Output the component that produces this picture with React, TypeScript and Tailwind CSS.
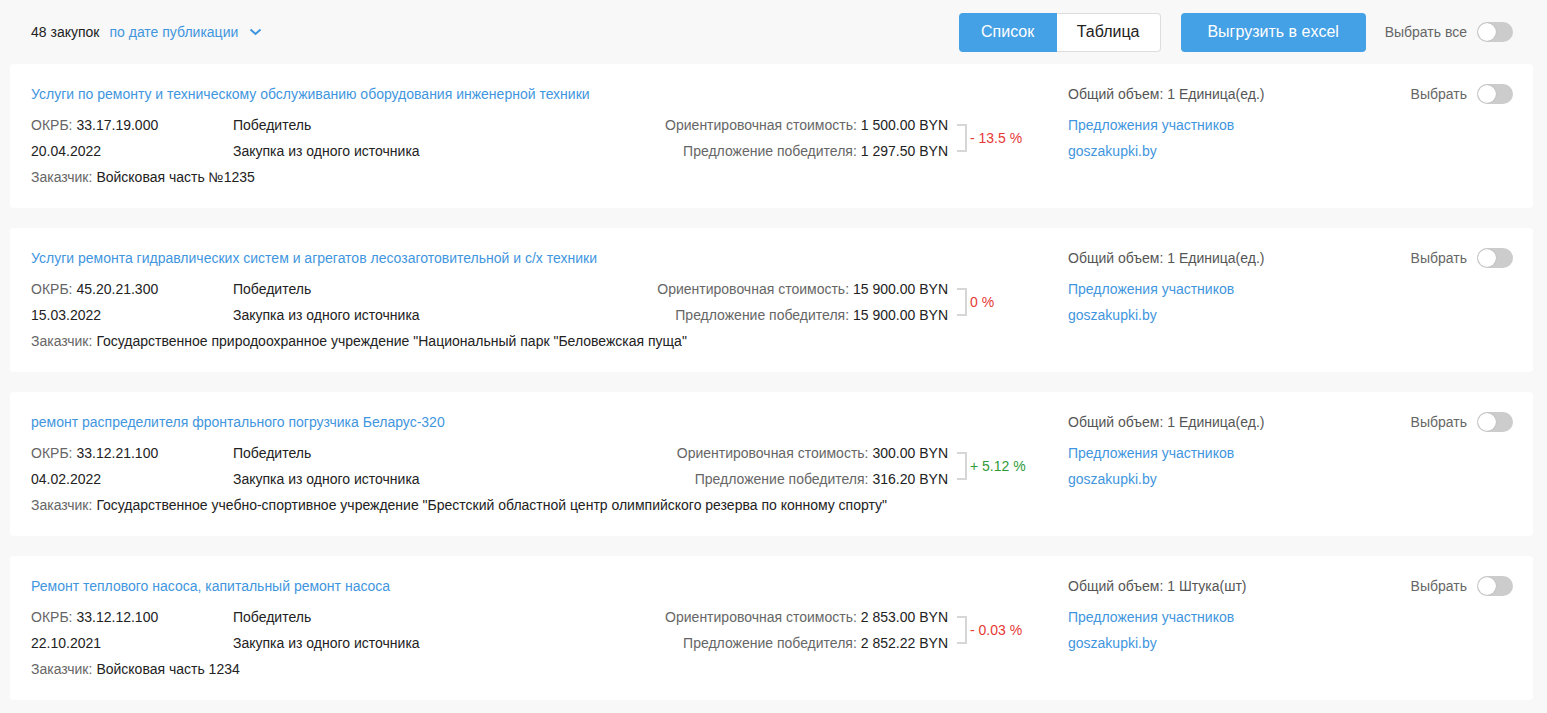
import React from "react";

type Item = {
  title: string;
  okrb: string;
  date: string;
  customer: string;
  est: string;
  win: string;
  pct: string;
  up: boolean;
  vol: string;
};

const items: Item[] = [
  {
    title: "Услуги по ремонту и техническому обслуживанию оборудования инженерной техники",
    okrb: "33.17.19.000",
    date: "20.04.2022",
    customer: "Войсковая часть №1235",
    est: "1 500.00 BYN",
    win: "1 297.50 BYN",
    pct: "- 13.5 %",
    up: false,
    vol: "1 Единица(ед.)",
  },
  {
    title: "Услуги ремонта гидравлических систем и агрегатов лесозаготовительной и с/х техники",
    okrb: "45.20.21.300",
    date: "15.03.2022",
    customer: 'Государственное природоохранное учреждение "Национальный парк "Беловежская пуща"',
    est: "15 900.00 BYN",
    win: "15 900.00 BYN",
    pct: "0 %",
    up: false,
    vol: "1 Единица(ед.)",
  },
  {
    title: "ремонт распределителя фронтального погрузчика Беларус-320",
    okrb: "33.12.21.100",
    date: "04.02.2022",
    customer:
      'Государственное учебно-спортивное учреждение "Брестский областной центр олимпийского резерва по конному спорту"',
    est: "300.00 BYN",
    win: "316.20 BYN",
    pct: "+ 5.12 %",
    up: true,
    vol: "1 Единица(ед.)",
  },
  {
    title: "Ремонт теплового насоса, капитальный ремонт насоса",
    okrb: "33.12.12.100",
    date: "22.10.2021",
    customer: "Войсковая часть 1234",
    est: "2 853.00 BYN",
    win: "2 852.22 BYN",
    pct: "- 0.03 %",
    up: false,
    vol: "1 Штука(шт)",
  },
];

function Toggle() {
  return (
    <div className="relative h-[20px] w-[36px] rounded-full bg-[#cccccc]">
      <div className="absolute left-[1px] top-[1px] h-[18px] w-[18px] rounded-full bg-white shadow-[0_0_1px_rgba(0,0,0,0.3)]" />
    </div>
  );
}

function Card({ it }: { it: Item }) {
  return (
    <div className="ml-[10px] mr-[14px] flex rounded-[4px] bg-white pb-[18px] pl-[21px] pr-[20px] pt-[20px]">
      <div className="w-[1037px] shrink-0">
        <div className="h-[20px] leading-[20px] text-[#3f96de]">{it.title}</div>
        <div className="mt-[8px] flex">
          <div className="w-[202px]">
            <div className="flex h-[26px] items-center">
              <span className="text-[#666666]">ОКРБ:</span>
              <span className="ml-[4px] text-[#222222]">{it.okrb}</span>
            </div>
            <div className="flex h-[26px] items-center text-[#222222]">{it.date}</div>
          </div>
          <div className="flex-1">
            <div className="flex h-[26px] items-center text-[#222222]">Победитель</div>
            <div className="flex h-[26px] items-center text-[#222222]">Закупка из одного источника</div>
          </div>
          <div className="text-right">
            <div className="flex h-[26px] items-center justify-end">
              <span className="text-[#666666]">Ориентировочная стоимость:</span>
              <span className="ml-[4px] text-[#222222]">{it.est}</span>
            </div>
            <div className="flex h-[26px] items-center justify-end">
              <span className="text-[#666666]">Предложение победителя:</span>
              <span className="ml-[4px] text-[#222222]">{it.win}</span>
            </div>
          </div>
          <div className="flex w-[120px] items-center pl-[9px]">
            <div className="h-[28px] w-[10px] border-y-2 border-r-2 border-[#d6d6d6]" />
            <span className={"ml-[3px] " + (it.up ? "text-[#2f9a3a]" : "text-[#e53935]")}>{it.pct}</span>
          </div>
        </div>
        <div className="flex h-[26px] items-center">
          <span className="text-[#666666]">Заказчик:</span>
          <span className="ml-[4px] text-[#222222]">{it.customer}</span>
        </div>
      </div>
      <div className="flex-1">
        <div className="flex h-[20px] items-center justify-between">
          <span className="text-[#555555]">Общий объем: {it.vol}</span>
          <div className="flex items-center gap-[10px]">
            <span className="text-[#666666]">Выбрать</span>
            <Toggle />
          </div>
        </div>
        <div className="mt-[8px]">
          <div className="flex h-[26px] items-center text-[#3f96de]">Предложения участников</div>
          <div className="flex h-[26px] items-center text-[#3f96de]">goszakupki.by</div>
        </div>
      </div>
    </div>
  );
}

export default function App() {
  return (
    <div
      className="min-h-[713px] bg-[#f8f8f8] pb-[13px] text-[14px]"
      style={{ fontFamily: '"Liberation Sans", Arial, sans-serif' }}
    >
      <div className="flex h-[64px] items-center pl-[31px] pr-[34px]">
        <span className="text-[#222222]">48 закупок</span>
        <span className="ml-[10px] text-[#3f96de]">по дате публикации</span>
        <svg className="ml-[11px]" width="13" height="8" viewBox="0 0 13 8">
          <path d="M1.5 1.5 L6.5 6 L11.5 1.5" fill="none" stroke="#3f96de" strokeWidth="2" />
        </svg>
        <div className="flex-1" />
        <div className="flex h-[39px] text-[16px]">
          <div className="flex w-[98px] items-center justify-center rounded-l-[4px] bg-[#45a1e6] text-white">
            Список
          </div>
          <div className="flex w-[104px] items-center justify-center rounded-r-[4px] border border-l-0 border-[#dddddd] bg-white text-[#222222]">
            Таблица
          </div>
        </div>
        <div className="ml-[20px] flex h-[39px] w-[185px] items-center justify-center rounded-[4px] bg-[#45a1e6] text-[16px] text-white">
          Выгрузить в excel
        </div>
        <span className="ml-[19px] text-[#666666]">Выбрать все</span>
        <div className="ml-[10px]">
          <Toggle />
        </div>
      </div>
      <div className="flex flex-col gap-[20px]">
        {items.map((it, i) => (
          <Card key={i} it={it} />
        ))}
      </div>
    </div>
  );
}
